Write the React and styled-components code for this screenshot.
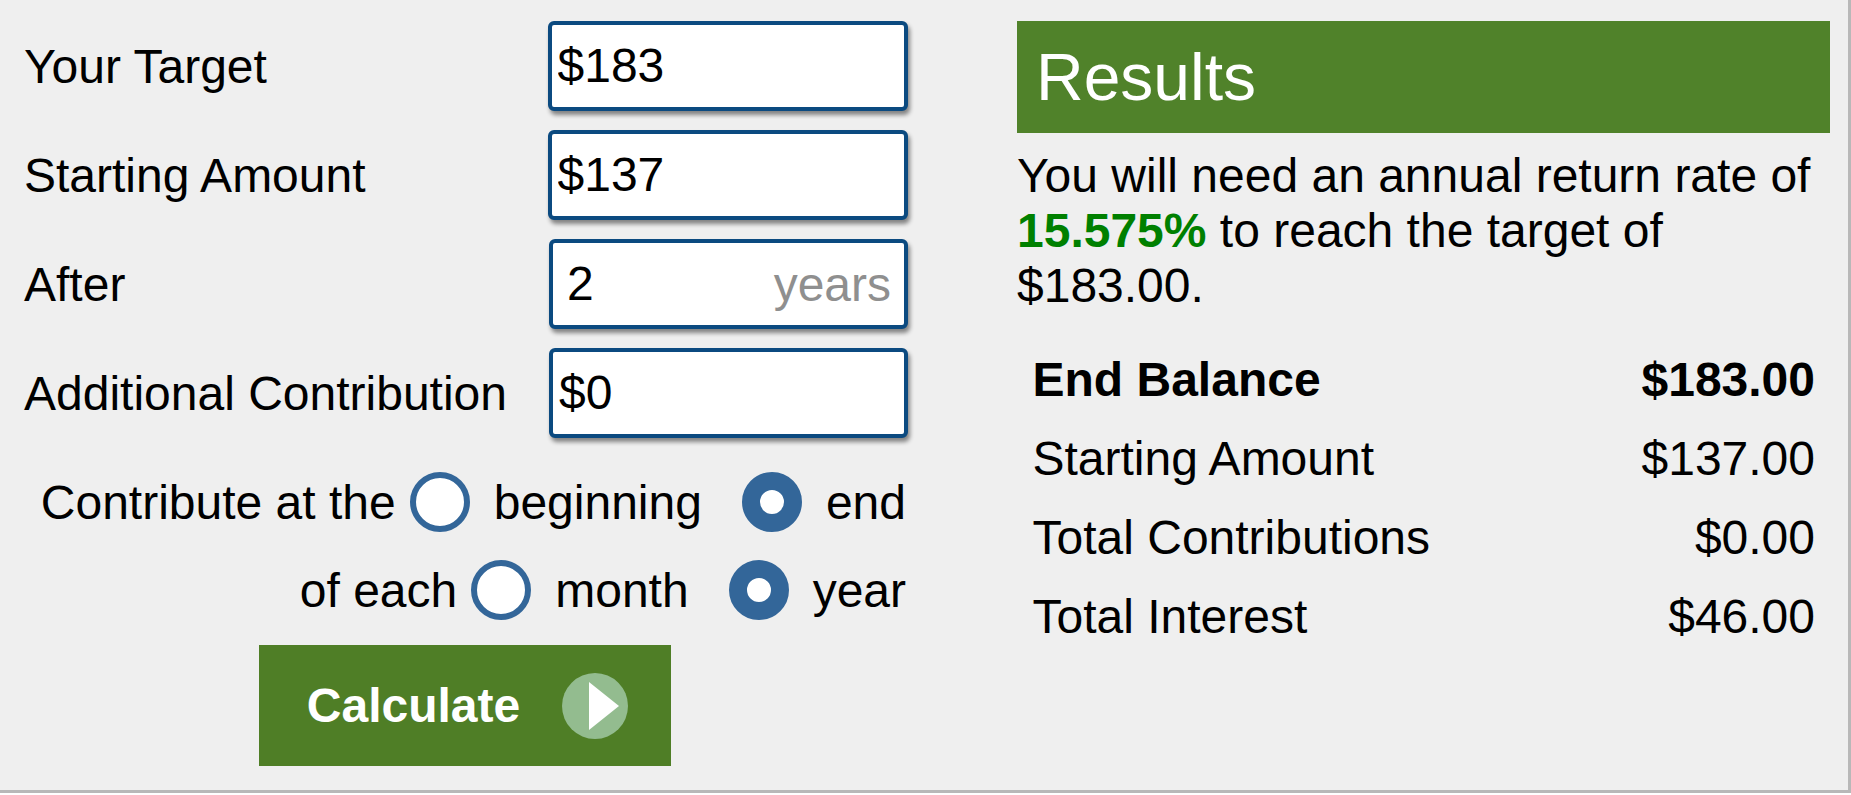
import styled, { createGlobalStyle } from "styled-components";

const GlobalStyle = createGlobalStyle`
  html, body {
    margin: 0;
    padding: 0;
    background: #fff;
  }
  * {
    box-sizing: border-box;
  }
`;

const fields = [
  { label: "Your Target", value: "$183" },
  { label: "Starting Amount", value: "$137" },
  { label: "After", value: "2", unit: "years" },
  { label: "Additional Contribution", value: "$0", narrow: true },
];

const summary = [
  { label: "End Balance", value: "$183.00", total: true },
  { label: "Starting Amount", value: "$137.00" },
  { label: "Total Contributions", value: "$0.00" },
  { label: "Total Interest", value: "$46.00" },
];

export default function App() {
  return (
    <Page>
      <GlobalStyle />
      <Calculator>
        <FormColumn>
          {fields.map((f) => (
            <Field key={f.label}>
              <Label>{f.label}</Label>
              <InputWrap $narrow={f.unit || f.narrow}>
                <Input readOnly value={f.value} $unit={f.unit} />
                {f.unit && <Unit>{f.unit}</Unit>}
              </InputWrap>
            </Field>
          ))}
          <RadioRow $first>
            <Prompt>Contribute at the</Prompt>
            <RadioOption>
              <Radio />
              beginning
            </RadioOption>
            <RadioOption $next>
              <Radio $checked />
              end
            </RadioOption>
          </RadioRow>
          <RadioRow>
            <Prompt>of each</Prompt>
            <RadioOption>
              <Radio />
              month
            </RadioOption>
            <RadioOption $next>
              <Radio $checked />
              year
            </RadioOption>
          </RadioRow>
          <ButtonRow>
            <CalculateButton type="button">
              Calculate
              <PlayIcon viewBox="0 0 66 66">
                <circle cx="33" cy="33" r="33" fill="#93bc8f" />
                <polygon points="27,9 57,33 27,57" fill="#fff" />
              </PlayIcon>
            </CalculateButton>
          </ButtonRow>
        </FormColumn>
        <ResultsColumn>
          <ResultsHeader>Results</ResultsHeader>
          <Summary>
            You will need an annual return rate of <Rate>15.575%</Rate> to reach
            the target of $183.00.
          </Summary>
          <ResultsTable>
            <tbody>
              {summary.map((row) => (
                <ResultRow key={row.label} $total={row.total}>
                  <td>{row.label}</td>
                  <td>{row.value}</td>
                </ResultRow>
              ))}
            </tbody>
          </ResultsTable>
        </ResultsColumn>
      </Calculator>
    </Page>
  );
}

const Page = styled.div`
  width: 1851px;
  height: 795px;
  font-family: "Liberation Sans", Arial, sans-serif;
  font-size: 48px;
  color: #000;
`;

const Calculator = styled.div`
  height: 793px;
  display: flex;
  padding: 21px 16px 0 24px;
  background: #efefef;
  border-right: 3px solid #b8b8b8;
  border-bottom: 3px solid #b8b8b8;
`;

const FormColumn = styled.div`
  width: 884px;
  display: flex;
  flex-direction: column;
`;

const Field = styled.div`
  display: flex;
  align-items: center;
  justify-content: space-between;
  height: 90px;
  margin-bottom: 19px;
`;

const Label = styled.label`
  line-height: 1;
  padding-top: 1px;
`;

const InputWrap = styled.div`
  position: relative;
  width: ${(p) => (p.$narrow ? "359px" : "360.5px")};
  height: 90px;
`;

const Input = styled.input`
  width: 100%;
  height: 100%;
  padding: 0 0 2px ${(p) => (p.$unit ? "14px" : "6px")};
  border: 4px solid #0b4a80;
  border-radius: 6px;
  background: #fff;
  box-shadow: 2px 4px 4px rgba(0, 0, 0, 0.45);
  font: inherit;
  color: #000;
  outline: none;
`;

const Unit = styled.span`
  position: absolute;
  right: 17px;
  top: 50%;
  transform: translateY(-50%);
  color: #8f8f8f;
`;

const RadioRow = styled.div`
  display: flex;
  align-items: center;
  justify-content: flex-end;
  height: 60px;
  margin-top: ${(p) => (p.$first ? "15px" : "28px")};
  padding-right: 2px;
`;

const Prompt = styled.span`
  margin-right: 14px;
`;

const RadioOption = styled.label`
  display: flex;
  align-items: center;
  gap: 24px;
  margin-left: ${(p) => (p.$next ? "40px" : "0")};
`;

const Radio = styled.span`
  display: block;
  width: 60px;
  height: 60px;
  border-radius: 50%;
  background: #fff;
  border: ${(p) => (p.$checked ? "18px" : "6px")} solid #336699;
`;

const ButtonRow = styled.div`
  display: flex;
  justify-content: center;
  margin-top: 25px;
  padding-right: 2px;
`;

const CalculateButton = styled.button`
  display: flex;
  align-items: center;
  justify-content: center;
  gap: 42px;
  width: 412px;
  height: 121px;
  padding: 0 0 0 5px;
  border: none;
  background: #4f7e26;
  color: #fff;
  font: bold 48px "Liberation Sans", Arial, sans-serif;
`;

const PlayIcon = styled.svg`
  width: 66px;
  height: 66px;
`;

const ResultsColumn = styled.div`
  margin-left: 109px;
  width: 813px;
`;

const ResultsHeader = styled.div`
  height: 112px;
  padding-left: 19px;
  background: #50822a;
  color: #fff;
  font-size: 66px;
  line-height: 112px;
`;

const Summary = styled.p`
  margin: 15px 0 0;
  line-height: 55px;
`;

const Rate = styled.b`
  color: #008000;
`;

const ResultsTable = styled.table`
  width: 100%;
  margin-top: 27px;
  border-collapse: collapse;
`;

const ResultRow = styled.tr`
  height: 79px;
  font-weight: ${(p) => (p.$total ? "bold" : "normal")};

  td {
    padding: 0 15px 0 15.5px;
  }
  td:last-child {
    text-align: right;
  }
`;
